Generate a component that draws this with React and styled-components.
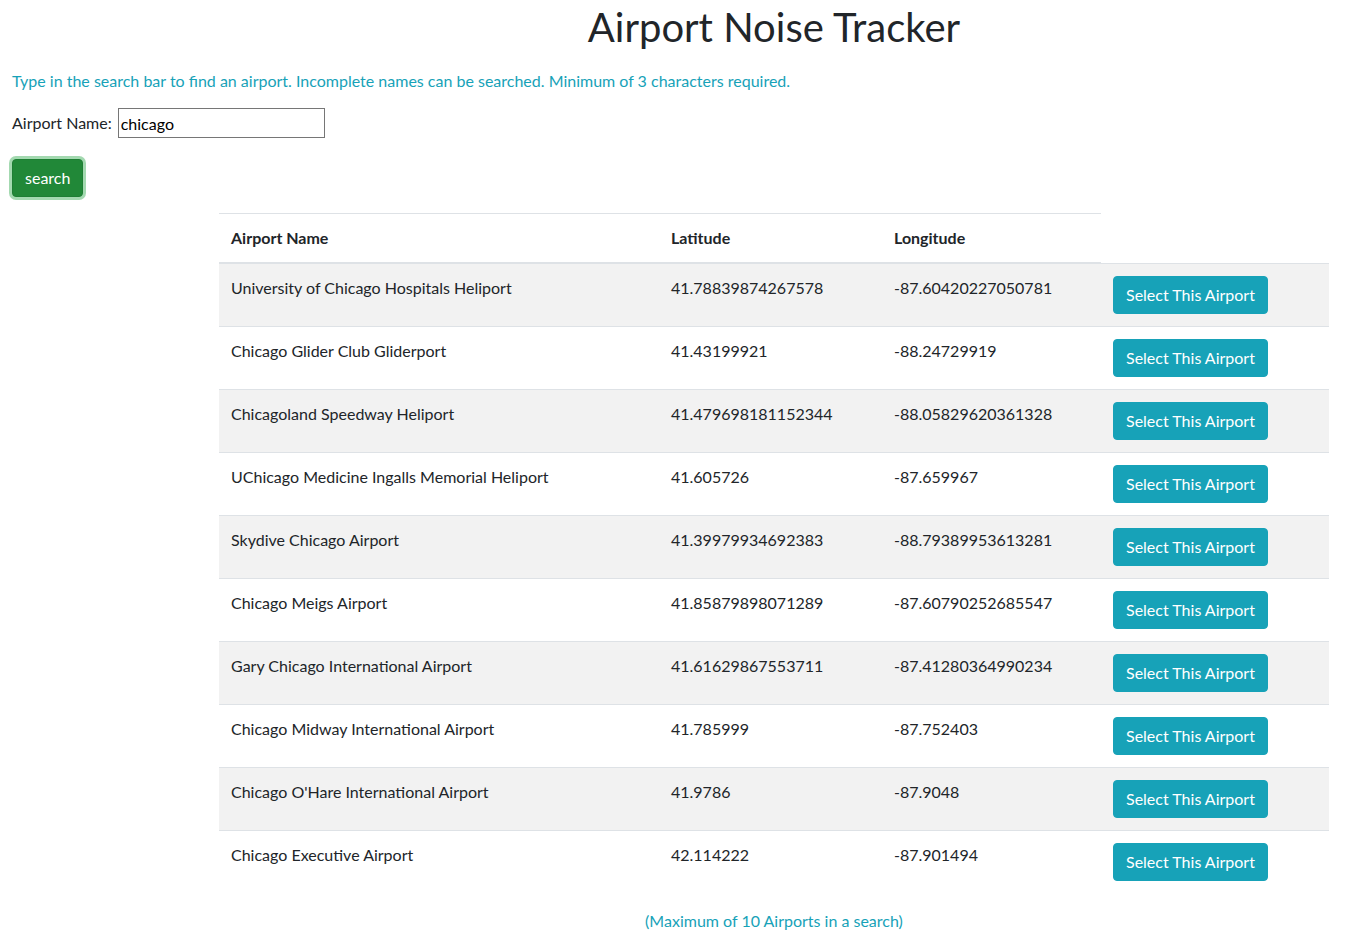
import React, { useState } from 'react';
import styled, { createGlobalStyle } from 'styled-components';

const GlobalStyle = createGlobalStyle`
  *, *::before, *::after {
    box-sizing: border-box;
  }

  body {
    margin: 0;
    font-family: Lato, "Segoe UI", "Open Sans", sans-serif;
    font-size: 16px;
    line-height: 1.5;
    color: #212529;
    background: #fff;
  }
`;

const Page = styled.div`
  padding: 0 0 12px 0;
`;

const Centered = styled.div`
  width: 1110px;
  margin-left: 219px;
`;

const Title = styled.h1`
  margin: 3px 0 18px;
  font-size: 40px;
  font-weight: 400;
  line-height: 48px;
  text-align: center;
`;

const Hint = styled.p`
  margin: 0 0 15px;
  padding-left: ${props => (props.$center ? '0' : '12px')};
  color: #17a2b8;
  text-align: ${props => (props.$center ? 'center' : 'left')};
`;

const SearchForm = styled.form`
  padding-left: 12px;
  margin-bottom: 16px;
`;

const FieldRow = styled.div`
  display: flex;
  align-items: center;
  gap: 6px;
  margin-bottom: 21px;
`;

const Label = styled.label`
  font-size: 16px;
`;

const TextInput = styled.input`
  width: 207px;
  height: 30px;
  padding: 0 2px;
  border: 1px solid #767676;
  border-radius: 0;
  font-family: inherit;
  font-size: 16px;
  color: #000;
  outline: none;
`;

const Button = styled.button`
  display: inline-block;
  padding: 6px 12px;
  font-family: inherit;
  font-size: 16px;
  line-height: 24px;
  color: #fff;
  border-radius: 4px;
  cursor: pointer;
  background-color: ${props => (props.$variant === 'success' ? '#218838' : '#17a2b8')};
  border: 1px solid ${props => (props.$variant === 'success' ? '#1e7e34' : '#17a2b8')};
  box-shadow: ${props => (props.$focused ? '0 0 0 3px rgba(72, 180, 97, 0.5)' : 'none')};
`;

const Table = styled.table`
  width: 1110px;
  margin-bottom: 16px;
  border-collapse: collapse;
  table-layout: fixed;
  color: #212529;
`;

const Th = styled.th`
  padding: 12px;
  text-align: left;
  vertical-align: bottom;
  font-weight: 700;
  border-top: 1px solid #dee2e6;
  border-bottom: 2px solid #dee2e6;
`;

const Tr = styled.tr`
  &:nth-of-type(odd) {
    background-color: rgba(0, 0, 0, 0.05);
  }
`;

const Td = styled.td`
  padding: 12px;
  vertical-align: top;
  border-top: 1px solid #dee2e6;
`;

const airports = [
  { name: 'University of Chicago Hospitals Heliport', lat: '41.78839874267578', lng: '-87.60420227050781' },
  { name: 'Chicago Glider Club Gliderport', lat: '41.43199921', lng: '-88.24729919' },
  { name: 'Chicagoland Speedway Heliport', lat: '41.479698181152344', lng: '-88.05829620361328' },
  { name: 'UChicago Medicine Ingalls Memorial Heliport', lat: '41.605726', lng: '-87.659967' },
  { name: 'Skydive Chicago Airport', lat: '41.39979934692383', lng: '-88.79389953613281' },
  { name: 'Chicago Meigs Airport', lat: '41.85879898071289', lng: '-87.60790252685547' },
  { name: 'Gary Chicago International Airport', lat: '41.61629867553711', lng: '-87.41280364990234' },
  { name: 'Chicago Midway International Airport', lat: '41.785999', lng: '-87.752403' },
  { name: "Chicago O'Hare International Airport", lat: '41.9786', lng: '-87.9048' },
  { name: 'Chicago Executive Airport', lat: '42.114222', lng: '-87.901494' },
];

const App = () => {
  const [query, setQuery] = useState('chicago');

  return (
    <Page>
      <GlobalStyle />
      <Centered>
        <Title>Airport Noise Tracker</Title>
      </Centered>

      <Hint>
        Type in the search bar to find an airport. Incomplete names can be searched. Minimum of 3 characters required.
      </Hint>

      <SearchForm onSubmit={e => e.preventDefault()}>
        <FieldRow>
          <Label htmlFor="airport">Airport Name:</Label>
          <TextInput id="airport" value={query} onChange={e => setQuery(e.target.value)} />
        </FieldRow>
        <Button type="submit" $variant="success" $focused>search</Button>
      </SearchForm>

      <Centered>
        <Table>
          <colgroup>
            <col style={{ width: 440 }} />
            <col style={{ width: 223 }} />
            <col style={{ width: 219 }} />
            <col style={{ width: 228 }} />
          </colgroup>
          <thead>
            <tr>
              <Th>Airport Name</Th>
              <Th>Latitude</Th>
              <Th>Longitude</Th>
            </tr>
          </thead>
          <tbody>
            {airports.map(item => (
              <Tr key={item.name}>
                <Td>{item.name}</Td>
                <Td>{item.lat}</Td>
                <Td>{item.lng}</Td>
                <Td>
                  <Button type="button">Select This Airport</Button>
                </Td>
              </Tr>
            ))}
          </tbody>
        </Table>
        <Hint $center>(Maximum of 10 Airports in a search)</Hint>
      </Centered>
    </Page>
  );
};

export default App;
